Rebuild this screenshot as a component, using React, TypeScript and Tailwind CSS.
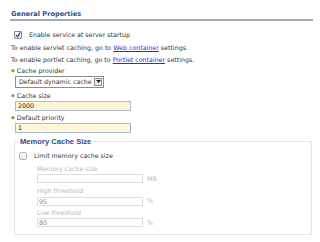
export default function App() {
  return (
    <div className="w-[320px] h-[242px] bg-white font-['DejaVu_Sans',sans-serif] text-[6.3px] text-[#333] pl-[10px] pr-[7px] pt-[10px]">
      <div className="border-b-2 border-[#9eaac0] h-[11px] pl-[1px] leading-[8px] font-bold text-[#2f4f86] text-[6.6px]">
        General Properties
      </div>

      <div className="flex items-center h-[11px] mt-[8px] pl-[4px]">
        <span className="w-[8px] h-[8px] border border-[#8a8a8a] rounded-[1px] bg-gradient-to-b from-white to-[#dcdcdc] flex items-center justify-center">
          <svg width="8" height="8" viewBox="0 0 8 8">
            <path d="M1.5 4.2 L3.3 6.2 L7.2 0.5" fill="none" stroke="#1e3e8c" strokeWidth="1.5" />
          </svg>
        </span>
        <span className="ml-[7px]">Enable service at server startup</span>
      </div>

      <div className="pl-[1px] mt-[2px] leading-[12px]">
        <div>
          To enable servlet caching, go to <span className="text-[#2a2ae0] underline">Web container</span> settings.
        </div>
        <div>
          To enable portlet caching, go to <span className="text-[#2a2ae0] underline">Portlet container</span> settings.
        </div>
      </div>

      <div>
        <div className="flex items-center h-[9px] pl-[1px]">
          <span className="text-[#b38b1a] text-[5px] mr-[2px]">◆</span>
          <span>Cache provider</span>
        </div>
        <div className="ml-[5px] mt-[1px] w-[89px] h-[12px] border border-[#8d8d8d] bg-white flex items-center justify-between pl-[3px] pr-[1px]">
          <span>Default dynamic cache</span>
          <span className="w-[8px] h-[8px] border border-[#8d8d8d] bg-[#eee] flex items-center justify-center">
            <svg width="5" height="4" viewBox="0 0 5 4">
              <path d="M0 0 L5 0 L2.5 3 Z" fill="#222" />
            </svg>
          </span>
        </div>
      </div>

      <div className="mt-[3px]">
        <div className="flex items-center h-[9px] pl-[1px]">
          <span className="text-[#b38b1a] text-[5px] mr-[2px]">◆</span>
          <span>Cache size</span>
        </div>
        <div className="ml-[5px] mt-[1px] w-[116px] h-[10px] border border-[#a9bcd6] bg-[#fdf5d6] flex items-center pl-[2px] text-[#222]">
          2000
        </div>
      </div>

      <div className="mt-[2px]">
        <div className="flex items-center h-[9px] pl-[1px]">
          <span className="text-[#b38b1a] text-[5px] mr-[2px]">◆</span>
          <span>Default priority</span>
        </div>
        <div className="ml-[5px] mt-[1px] w-[116px] h-[10px] border border-[#a9bcd6] bg-[#fdf5d6] flex items-center pl-[2px] text-[#222]">
          1
        </div>
      </div>

      <fieldset className="ml-[4px] mt-[4px] w-[298px] h-[98px] border border-[#e6e6e6] pl-[4px] pt-0 m-0">
        <legend className="px-[1px] font-bold font-['Liberation_Sans',sans-serif] text-[#2a4f8f] text-[7.6px] leading-[9px]">
          Memory Cache Size
        </legend>

        <div className="flex items-center h-[10px] mt-[5px]">
          <span className="w-[8px] h-[8px] border border-[#b8b8b8] rounded-[2px] bg-gradient-to-b from-white to-[#ececec]" />
          <span className="ml-[7px]">Limit memory cache size</span>
        </div>

        <div className="pl-[18px] text-[#b8b8b8]">
          <div className="h-[8px] leading-[8px] mt-[4px]">Memory cache size</div>
          <div className="flex items-center mt-[1px]">
            <div className="w-[106px] h-[9px] border border-[#dcdcdc] bg-white" />
            <span className="ml-[4px]">MB</span>
          </div>

          <div className="h-[8px] leading-[8px] mt-[4px]">High threshold</div>
          <div className="flex items-center mt-[1px]">
            <div className="w-[106px] h-[9px] border border-[#dcdcdc] bg-white pl-[1px] leading-[7px] text-[#8a8a8a]">95</div>
            <span className="ml-[4px]">%</span>
          </div>

          <div className="h-[8px] leading-[8px] mt-[3px]">Low threshold</div>
          <div className="flex items-center mt-[1px]">
            <div className="w-[106px] h-[9px] border border-[#dcdcdc] bg-white pl-[1px] leading-[7px] text-[#8a8a8a]">80</div>
            <span className="ml-[4px]">%</span>
          </div>
        </div>
      </fieldset>
    </div>
  )
}
